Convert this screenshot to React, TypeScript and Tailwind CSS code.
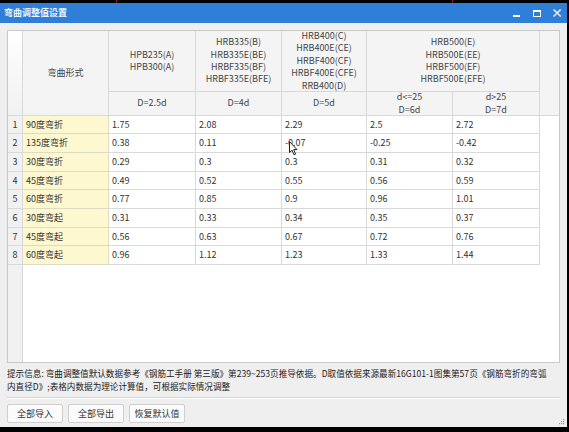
import React from "react"

const font = { fontFamily: '"Noto Sans CJK SC", "Noto Sans", sans-serif' }

const rows: [string, string[]][] = [
    ["90度弯折", ["1.75", "2.08", "2.29", "2.5", "2.72"]],
    ["135度弯折", ["0.38", "0.11", "-0.07", "-0.25", "-0.42"]],
    ["30度弯折", ["0.29", "0.3", "0.3", "0.31", "0.32"]],
    ["45度弯折", ["0.49", "0.52", "0.55", "0.56", "0.59"]],
    ["60度弯折", ["0.77", "0.85", "0.9", "0.96", "1.01"]],
    ["30度弯起", ["0.31", "0.33", "0.34", "0.35", "0.37"]],
    ["45度弯起", ["0.56", "0.63", "0.67", "0.72", "0.76"]],
    ["60度弯起", ["0.96", "1.12", "1.23", "1.33", "1.44"]],
]

// 行高交替，让网格线落在截图的位置上
const rowH = ["h-[18px]", "h-[19px]", "h-[19px]", "h-[18px]", "h-[19px]", "h-[19px]", "h-[18px]", "h-[19px]"]

const cols = "grid grid-cols-[15px_86px_87px_86px_85px_86px_87px]"
const hcell = "bg-[#f4f4f4] border-r border-b border-[#d9d9d9] flex flex-col items-center justify-center text-center text-[#444] leading-[12.4px]"

export default function App() {
    return <div className="w-[569px] h-[432px] bg-black text-[9px] text-[#333] overflow-hidden relative" style={font}>
        {/* 背后桌面的细线 */}
        <div className="absolute left-[116px] top-0 w-px h-[3px] bg-[#7a1a1a]" />
        <div className="absolute left-[452px] top-0 w-px h-[3px] bg-[#7a1a1a]" />

        <div className="pt-[3px] pr-[2px] h-[427px] flex flex-col">
            {/* 标题栏 */}
            <div className="h-[20px] bg-[#2f7fd8] flex items-center pl-[4px] text-[#eef4fc]">
                <span className="text-[9px] font-bold">弯曲调整值设置</span>
                <div className="ml-auto flex items-center">
                    <div className="w-[20px] flex justify-center"><span className="w-[7px] h-[2px] bg-white mt-[5px]" /></div>
                    <div className="w-[21px] flex justify-center"><span className="w-[8px] h-[7px] border border-white border-t-2" /></div>
                    <div className="w-[20px] flex justify-center"><span className="text-[12px] leading-none font-bold">×</span></div>
                </div>
            </div>

            <div className="flex-1 bg-[#efefef] flex flex-col px-[7px] pt-[7px] relative">
                {/* 表格 */}
                <div className="h-[333px] bg-white border border-[#c9c9c9] flex flex-col">
                    <div className="flex">
                        <div className={cols + " grid-rows-[61px_24px]"}>
                            <div className={hcell + " row-span-2 bg-gradient-to-b from-white to-[#f1f1f1]"} />
                            <div className={hcell + " row-span-2"}>弯曲形式</div>
                            <div className={hcell}><span>HPB235(A)</span><span>HPB300(A)</span></div>
                            <div className={hcell}>
                                <span>HRB335(B)</span><span>HRB335E(BE)</span><span>HRBF335(BF)</span><span>HRBF335E(BFE)</span>
                            </div>
                            <div className={hcell}>
                                <span>HRB400(C)</span><span>HRB400E(CE)</span><span>HRBF400(CF)</span><span>HRBF400E(CFE)</span><span>RRB400(D)</span>
                            </div>
                            <div className={hcell + " col-span-2"}>
                                <span>HRB500(E)</span><span>HRB500E(EE)</span><span>HRBF500(EF)</span><span>HRBF500E(EFE)</span>
                            </div>
                            <div className={hcell}>D=2.5d</div>
                            <div className={hcell}>D=4d</div>
                            <div className={hcell}>D=5d</div>
                            <div className={hcell}><span>d&lt;=25</span><span>D=6d</span></div>
                            <div className={hcell}><span>d&gt;25</span><span>D=7d</span></div>
                        </div>
                        <div className="flex-1 bg-[#f4f4f4] border-b border-[#d9d9d9]" />
                    </div>

                    {rows.map(([name, vals], i) =>
                        <div key={i} className={cols + " " + rowH[i]}>
                            <div className="bg-[#f1f1f1] border-r border-b border-[#d9d9d9] flex items-center justify-center">{i + 1}</div>
                            <div className="bg-[#fdf8d0] border-r border-b border-[#dedbc4] flex items-center pl-[3px]">{name}</div>
                            {vals.map((v, j) =>
                                <div key={j} className="border-r border-b border-[#d9d9d9] flex items-center pl-[3px]">{v}</div>
                            )}
                        </div>
                    )}

                    <div className="flex-1 flex">
                        <div className="w-[15px] bg-[#f1f1f1] border-r border-[#d9d9d9]" />
                    </div>
                </div>

                {/* 提示信息 */}
                <div className="mt-[4px] text-[8.6px] leading-[13px] text-[#222] whitespace-nowrap">
                    <div>提示信息: 弯曲调整值默认数据参考《钢筋工手册 第三版》第239~253页推导依据。D取值依据来源最新16G101-1图集第57页《钢筋弯折的弯弧</div>
                    <div>内直径D》;表格内数据为理论计算值，可根据实际情况调整</div>
                </div>

                <div className="mt-[4px] border-t border-[#d6d6d6] border-b border-b-white" />

                <div className="mt-[5px] flex gap-[5px]">
                    {["全部导入", "全部导出", "恢复默认值"].map(b =>
                        <button key={b} className="w-[56px] h-[19px] bg-[#fbfbfb] border border-[#cfcfcf] rounded-[2px] text-[9px] text-[#333]" style={font}>{b}</button>
                    )}
                </div>

                {/* 右下角拖拽点 */}
                <svg className="absolute right-[2px] bottom-[2px]" width="7" height="7" viewBox="0 0 7 7">
                    <rect x="5" y="1" width="1.2" height="1.2" fill="#999" />
                    <rect x="3" y="3" width="1.2" height="1.2" fill="#999" />
                    <rect x="5" y="3" width="1.2" height="1.2" fill="#999" />
                    <rect x="1" y="5" width="1.2" height="1.2" fill="#999" />
                    <rect x="3" y="5" width="1.2" height="1.2" fill="#999" />
                    <rect x="5" y="5" width="1.2" height="1.2" fill="#999" />
                </svg>
            </div>
        </div>

        {/* 鼠标 */}
        <svg className="absolute left-[289px] top-[141px]" width="10" height="15" viewBox="0 0 10 15">
            <path d="M0.5 0.5 L0.5 11.5 L3 9.2 L5 13.8 L6.6 13.1 L4.7 8.6 L8 8.6 Z" fill="#fff" stroke="#222" strokeWidth="1" strokeLinejoin="round" />
        </svg>
    </div>
}
